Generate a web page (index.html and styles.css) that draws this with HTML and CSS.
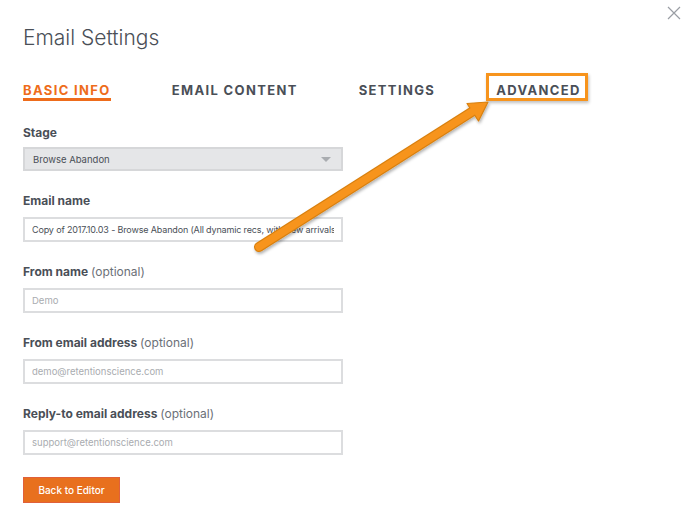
FILE: index.html
```html
<!DOCTYPE html>
<html lang="en">
<head>
<meta charset="UTF-8">
<meta name="viewport" content="width=device-width, initial-scale=1.0">
<title>Email Settings</title>
<link rel="stylesheet" href="styles.css">
</head>
<body>
  <div class="modal">
    <a class="close" href="#" aria-label="Close">
      <svg width="14" height="14" viewBox="0 0 14 14"><path d="M1 1 L13 13 M13 1 L1 13" stroke="#9a9ea4" stroke-width="1.2" fill="none"/></svg>
    </a>

    <h1>Email Settings</h1>

    <nav class="tabs">
      <a href="#" class="tab active">BASIC INFO</a>
      <a href="#" class="tab">EMAIL CONTENT</a>
      <a href="#" class="tab">SETTINGS</a>
      <a href="#" class="tab highlight">ADVANCED</a>
    </nav>

    <form class="settings-form">
      <div class="field stage">
        <label>Stage</label>
        <div class="select">
          <span>Browse Abandon</span>
          <span class="caret"></span>
        </div>
      </div>

      <div class="field">
        <label>Email name</label>
        <input type="text" class="value" value="Copy of 2017.10.03 - Browse Abandon (All dynamic recs, with new arrivals,">
      </div>

      <div class="field">
        <label>From name <span>(optional)</span></label>
        <input type="text" placeholder="Demo">
      </div>

      <div class="field">
        <label>From email address <span>(optional)</span></label>
        <input type="text" placeholder="demo@retentionscience.com">
      </div>

      <div class="field">
        <label>Reply-to email address <span>(optional)</span></label>
        <input type="text" placeholder="support@retentionscience.com">
      </div>

      <button type="button" class="btn">Back to Editor</button>
    </form>
  </div>

  <!-- annotation arrow pointing at the Advanced tab -->
  <svg class="arrow" width="685" height="511" viewBox="0 0 685 511">
    <defs>
      <filter id="shadow" x="-10%" y="-10%" width="120%" height="120%">
        <feDropShadow dx="1" dy="2" stdDeviation="1.5" flood-color="#000" flood-opacity="0.3"/>
      </filter>
    </defs>
    <g filter="url(#shadow)">
      <line x1="259" y1="247" x2="474" y2="110.5" stroke="#d9800f" stroke-width="10" stroke-linecap="round"/>
      <polygon points="488,102 478.5,121 467,103.5" fill="#f7941d" stroke="#d9800f" stroke-width="1.2" stroke-linejoin="round"/>
      <line x1="259" y1="247" x2="474" y2="110.5" stroke="#f7941d" stroke-width="7.5" stroke-linecap="round"/>
    </g>
  </svg>
</body>
</html>
```

FILE: styles.css
```css
body {
  margin: 0;
  padding: 0;
  font-family: Inter, "Noto Sans", sans-serif;
  background-color: #fff;
  color: #4a4f57;
}
a {
  text-decoration: none;
}

.modal {
  position: relative;
  padding: 24px 23px 0 23px;
}
.close {
  position: absolute;
  top: 4px;
  right: 4px;
  display: block;
  width: 14px;
  height: 14px;
}
.modal h1 {
  margin: 0;
  font-size: 21px;
  line-height: 28px;
  font-weight: 300;
  color: #4a4f57;
}

.tabs {
  display: flex;
  gap: 61px;
  margin-top: 30px;
}
.tab {
  position: relative;
  font-size: 13px;
  line-height: 16px;
  font-weight: 700;
  letter-spacing: 1.35px;
  color: #4a4f57;
  border-bottom: 3px solid transparent;
}
.tab.active {
  color: #ee6c1b;
  border-bottom-color: #ee6c1b;
}
.tab.highlight::after {
  content: "";
  position: absolute;
  top: -9px;
  left: -10px;
  right: -7px;
  bottom: -3px;
  border: 3px solid #f7941d;
  box-shadow: 1px 2px 3px rgba(0, 0, 0, 0.25);
}

.settings-form {
  margin-top: 24px;
}
.field {
  margin-bottom: 22px;
}
.field label {
  display: block;
  font-size: 12px;
  line-height: 16px;
  font-weight: 700;
  color: #4a4f57;
  margin-bottom: 8px;
}
.field.stage label {
  margin-bottom: 6px;
}
.field label span {
  font-weight: 400;
  color: #6b7077;
}
.select {
  box-sizing: border-box;
  width: 320px;
  height: 24px;
  display: flex;
  align-items: center;
  justify-content: space-between;
  padding: 0 8px;
  background-color: #e5e6e8;
  border: 2px solid #d6d7d9;
  font-size: 9.5px;
  color: #4a4f57;
}
.caret {
  width: 0;
  height: 0;
  border-left: 5px solid transparent;
  border-right: 5px solid transparent;
  border-top: 5px solid #a9acb0;
  margin-right: 2px;
}
.field input {
  box-sizing: border-box;
  display: block;
  width: 320px;
  height: 25px;
  padding: 0 7px;
  margin: 0;
  border: 2px solid #dcdddf;
  font-family: Inter, "Noto Sans", sans-serif;
  font-size: 9.5px;
  color: #4a4f57;
  outline: none;
}
.field input.value {
  font-size: 9px;
  letter-spacing: -0.15px;
}
.field input::placeholder {
  color: #a9acb0;
}

.btn {
  display: block;
  margin-top: 22px;
  width: 97px;
  height: 26px;
  padding: 0;
  background-color: #e8701e;
  border: 1px solid #e0603a;
  color: #fff;
  font-family: Inter, "Noto Sans", sans-serif;
  font-size: 10px;
  font-weight: 500;
}

.arrow {
  position: absolute;
  top: 0;
  left: 0;
  pointer-events: none;
}
```
